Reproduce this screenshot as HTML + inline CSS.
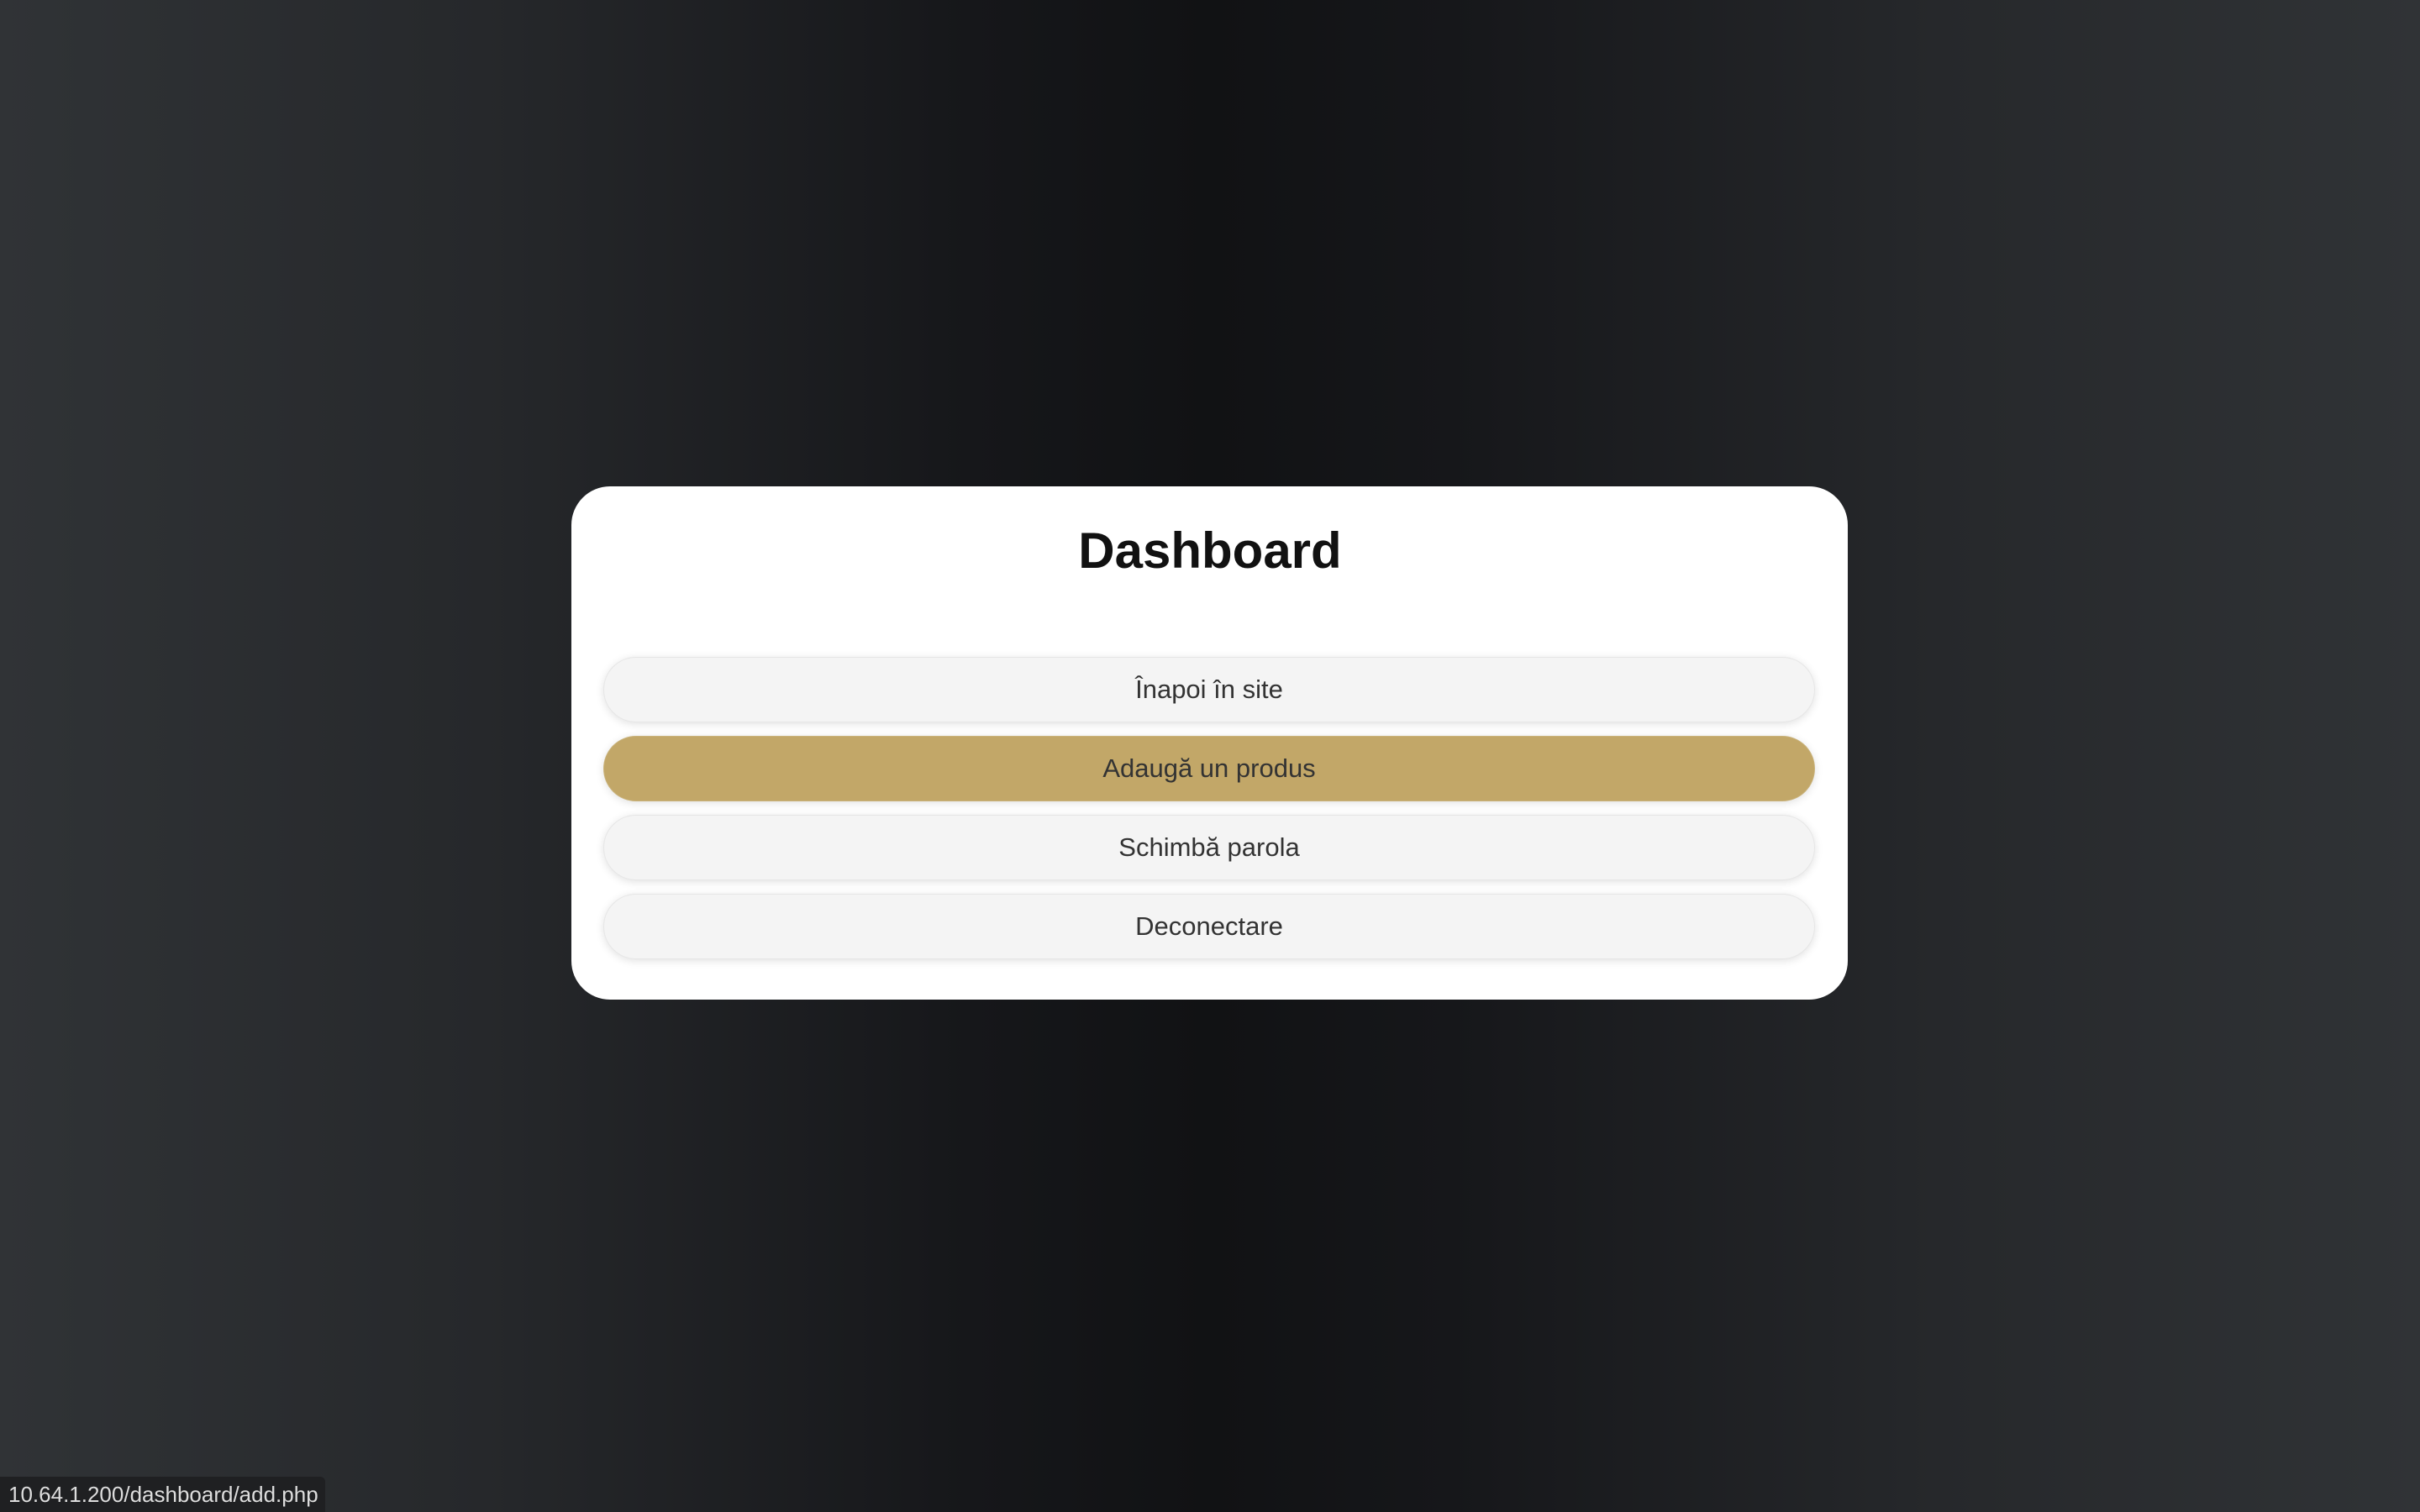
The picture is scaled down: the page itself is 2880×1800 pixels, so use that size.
<!DOCTYPE html>
<html><head><meta charset="utf-8"><style>
html,body{margin:0;width:2880px;height:1800px;overflow:hidden}
body{background:linear-gradient(90deg,#303336 0%,#26282b 20%,#16171a 40%,#111214 50%,#16171a 60%,#26282b 80%,#303336 100%);font-family:"Liberation Sans",sans-serif;position:relative}
.card{position:absolute;left:680px;top:579px;width:1519px;height:611px;background:#fff;border-radius:46px}
h1{position:absolute;left:0;right:0;top:616px;margin:0;text-align:center;font-size:60px;font-weight:bold;color:#111;line-height:80px}
.b{position:absolute;left:718px;width:1442px;height:78px;border-radius:39px;background:#f4f4f4;box-shadow:0 2px 10px rgba(0,0,0,0.12);border:1px solid #e6e6e6;box-sizing:border-box;text-align:center;line-height:76px;font-size:31px;color:#333}
.g{background:#c2a768;border-color:#c9b27a}
.s{position:absolute;left:0;top:1758px;width:387px;height:42px;background:#1f2022;border-top-right-radius:6px;color:#ddd;font-size:26px;line-height:42px;padding-left:10px;box-sizing:border-box}
</style></head><body>
<div class="card"></div>
<h1>Dashboard</h1>
<div class="b" style="top:782px">Înapoi în site</div>
<div class="b g" style="top:876px">Adaugă un produs</div>
<div class="b" style="top:970px">Schimbă parola</div>
<div class="b" style="top:1064px">Deconectare</div>
<div class="s">10.64.1.200/dashboard/add.php</div>
</body></html>
